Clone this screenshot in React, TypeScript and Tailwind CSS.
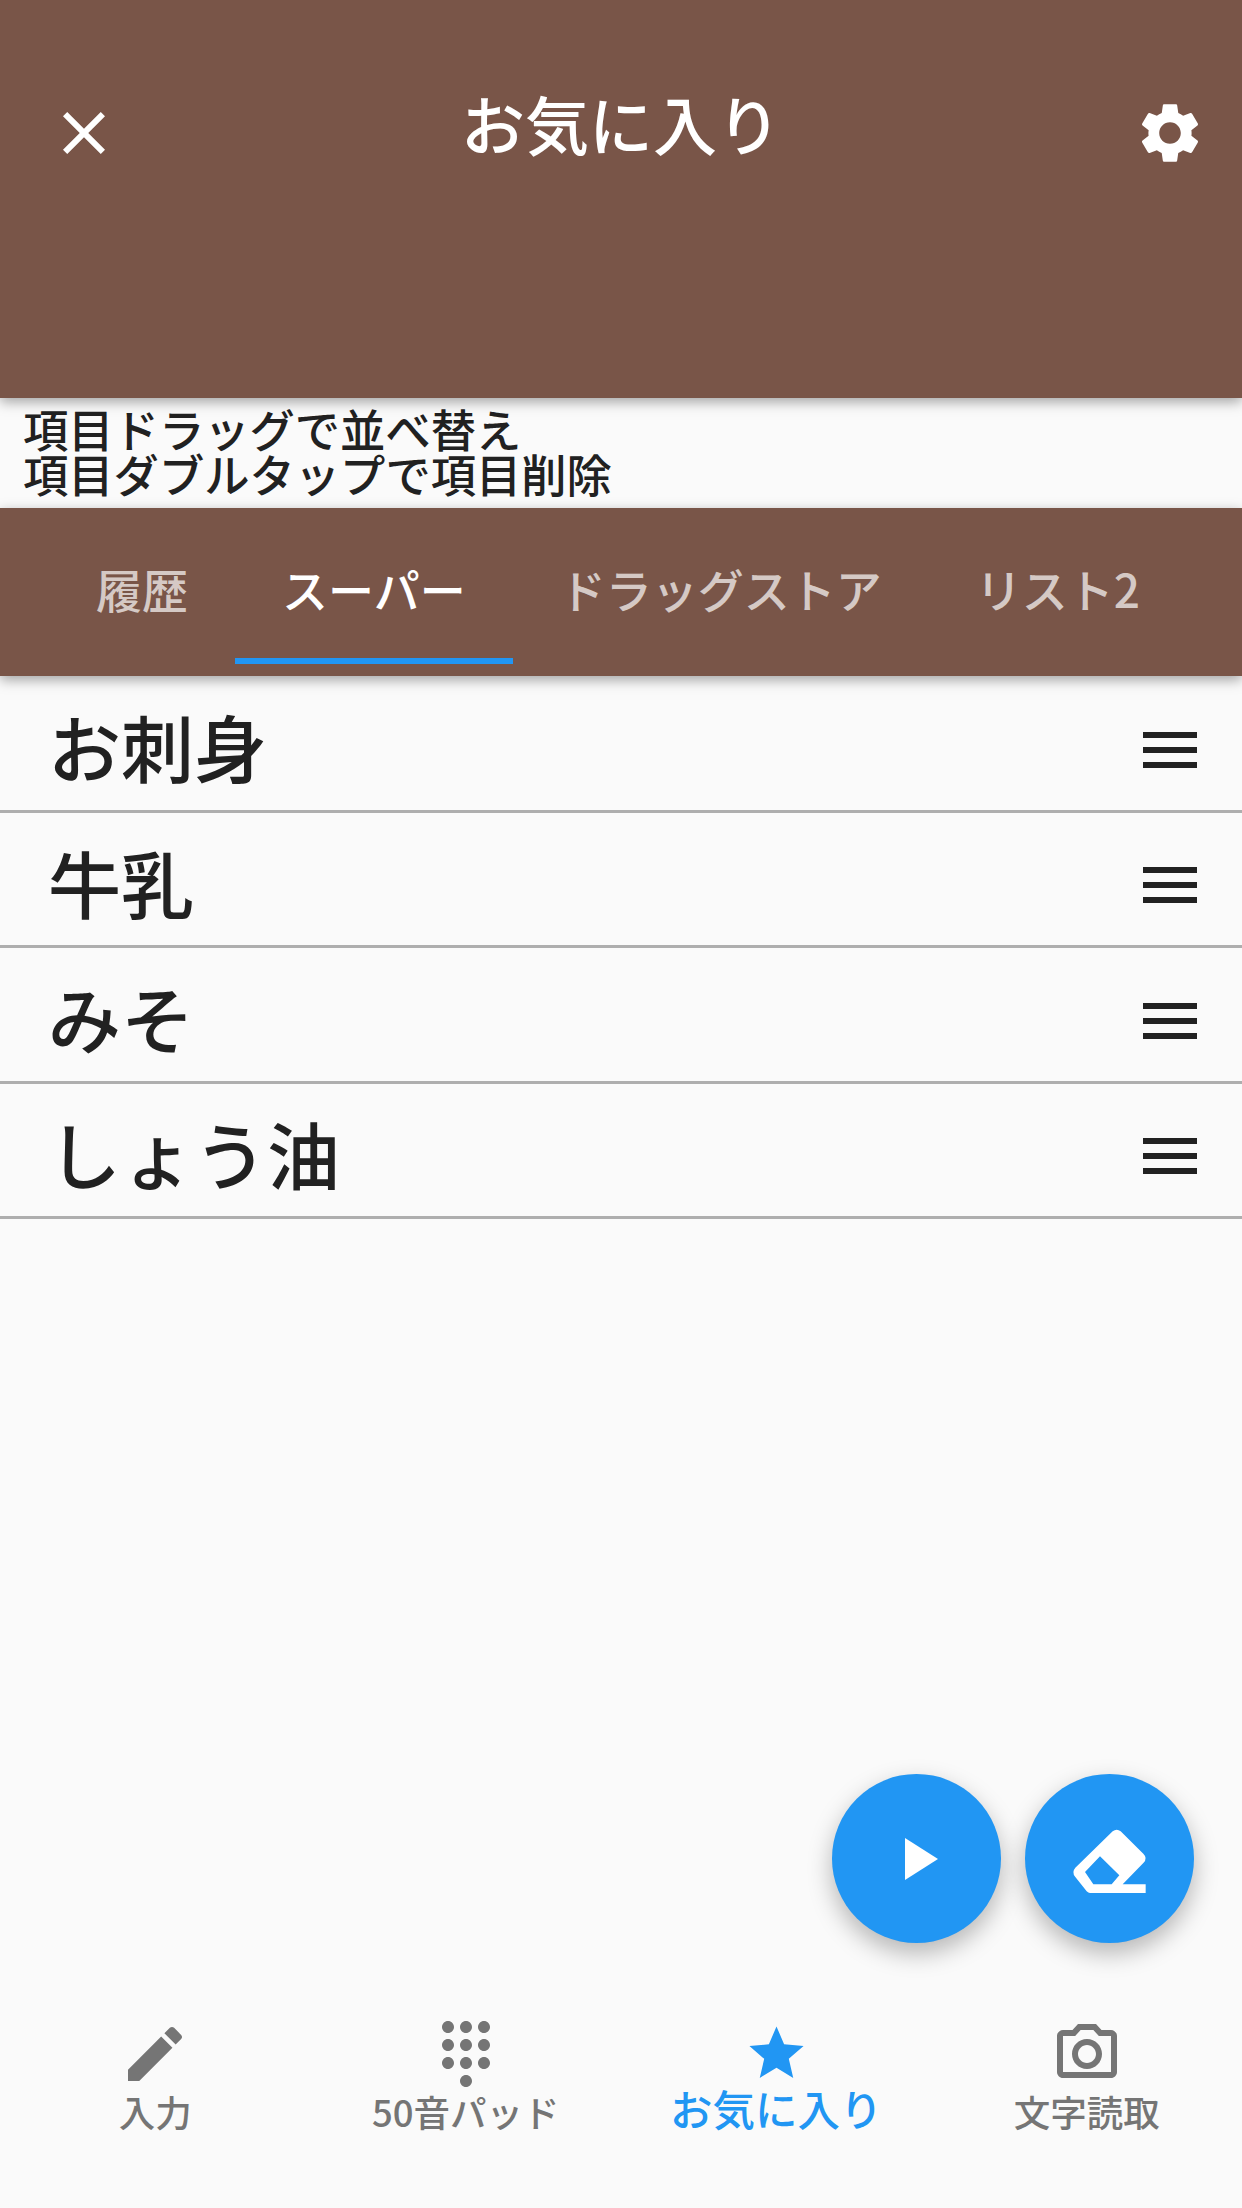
const cjk = "font-['Noto_Sans_CJK_JP',sans-serif]";

const items = ['お刺身', '牛乳', 'みそ', 'しょう油'];

function Icon({ d, className }: { d: string; className: string }) {
  return (
    <svg viewBox="0 0 24 24" className={className} fill="currentColor">
      <path d={d} />
    </svg>
  );
}

const CLOSE = 'M19 6.41L17.59 5 12 10.59 6.41 5 5 6.41 10.59 12 5 17.59 6.41 19 12 13.41 17.59 19 19 17.59 13.41 12z';
const SETTINGS =
  'M19.14,12.94c0.04-0.3,0.06-0.61,0.06-0.94c0-0.32-0.02-0.64-0.07-0.94l2.03-1.58c0.18-0.14,0.23-0.41,0.12-0.61 l-1.92-3.32c-0.12-0.22-0.37-0.29-0.59-0.22l-2.39,0.96c-0.5-0.38-1.03-0.7-1.62-0.94L14.4,2.81c-0.04-0.24-0.24-0.41-0.48-0.41 h-3.84c-0.24,0-0.43,0.17-0.47,0.41L9.25,5.35C8.66,5.59,8.12,5.92,7.63,6.29L5.24,5.33c-0.22-0.08-0.47,0-0.59,0.22L2.74,8.87 C2.62,9.08,2.66,9.34,2.86,9.48l2.03,1.58C4.84,11.36,4.8,11.69,4.8,12s0.02,0.64,0.07,0.94l-2.03,1.58 c-0.18,0.14-0.23,0.41-0.12,0.61l1.92,3.32c0.12,0.22,0.37,0.29,0.59,0.22l2.39-0.96c0.5,0.38,1.03,0.7,1.62,0.94l0.36,2.54 c0.05,0.24,0.24,0.41,0.48,0.41h3.84c0.24,0,0.44-0.17,0.47-0.41l0.36-2.54c0.59-0.24,1.13-0.56,1.62-0.94l2.39,0.96 c0.22,0.08,0.47,0,0.59-0.22l1.92-3.32c0.12-0.22,0.07-0.47-0.12-0.61L19.14,12.94z M12,15.6c-1.98,0-3.6-1.62-3.6-3.6 s1.62-3.6,3.6-3.6s3.6,1.62,3.6,3.6S13.98,15.6,12,15.6z';
const MENU = 'M3 18h18v-2H3v2zm0-5h18v-2H3v2zm0-7v2h18V6H3z';
const PLAY = 'M8 5v14l11-7z';
const EDIT =
  'M3 17.25V21h3.75L17.81 9.94l-3.75-3.75L3 17.25zM20.71 7.04c.39-.39.39-1.02 0-1.41l-2.34-2.34c-.39-.39-1.02-.39-1.41 0l-1.83 1.83 3.75 3.75 1.83-1.83z';
const DIALPAD =
  'M12 19c-1.1 0-2 .9-2 2s.9 2 2 2 2-.9 2-2-.9-2-2-2zM6 1c-1.1 0-2 .9-2 2s.9 2 2 2 2-.9 2-2-.9-2-2-2zm0 6c-1.1 0-2 .9-2 2s.9 2 2 2 2-.9 2-2-.9-2-2-2zm0 6c-1.1 0-2 .9-2 2s.9 2 2 2 2-.9 2-2-.9-2-2-2zm12-8c1.1 0 2-.9 2-2s-.9-2-2-2-2 .9-2 2 .9 2 2 2zm-6 8c-1.1 0-2 .9-2 2s.9 2 2 2 2-.9 2-2-.9-2-2-2zm6 0c-1.1 0-2 .9-2 2s.9 2 2 2 2-.9 2-2-.9-2-2-2zm0-6c-1.1 0-2 .9-2 2s.9 2 2 2 2-.9 2-2-.9-2-2-2zm-6 0c-1.1 0-2 .9-2 2s.9 2 2 2 2-.9 2-2-.9-2-2-2zm0-6c-1.1 0-2 .9-2 2s.9 2 2 2 2-.9 2-2-.9-2-2-2z';
const STAR = 'M12 17.27L18.18 21l-1.64-7.03L22 9.24l-7.19-.61L12 2 9.19 8.63 2 9.24l5.46 4.73L5.82 21z';
const CAMERA =
  'M14.12 4l1.83 2H20v12H4V6h4.05l1.83-2h4.24M15 2H9L7.17 4H4c-1.1 0-2 .9-2 2v12c0 1.1.9 2 2 2h16c1.1 0 2-.9 2-2V6c0-1.1-.9-2-2-2h-3.17L15 2zm-3 7c1.65 0 3 1.35 3 3s-1.35 3-3 3-3-1.35-3-3 1.35-3 3-3m0-2c-2.76 0-5 2.24-5 5s2.24 5 5 5 5-2.24 5-5-2.24-5-5-5z';

function Eraser() {
  return (
    <svg viewBox="870 260 240 210" className="w-[80px] h-[70px] mt-[6px]" fill="#ffffff">
      <path
        fillRule="evenodd"
        d="M998 273Q1010 263 1022 273L1090 340Q1104 354 1090 368L1028 432L1097 432L1097 458L930 458Q925 458 920 453L886 410Q874 396 886 382ZM960 348L1018 405L995 432L940 432L915 395Z"
      />
    </svg>
  );
}

function Tab({ label, active }: { label: string; active?: boolean }) {
  return (
    <div className="relative h-full px-[47px] flex items-center pb-[9px]">
      <span className={`text-[46px] font-medium leading-none whitespace-nowrap ${active ? 'text-white' : 'text-white/70'}`}>
        {label}
      </span>
      {active && <div className="absolute left-0 right-0 bottom-[12px] h-[6px] bg-[#2196f3]" />}
    </div>
  );
}

function NavItem({ d, label }: { d: string; label: string }) {
  return (
    <div className="flex flex-col items-center text-[#757575]">
      <Icon d={d} className="w-[72px] h-[72px]" />
      <span className="mt-px text-[36.5px] font-medium leading-[42px] whitespace-nowrap">{label}</span>
    </div>
  );
}

export default function App() {
  return (
    <div className={`relative w-[1242px] h-[2208px] overflow-hidden flex flex-col bg-[#fafafa] ${cjk}`}>
      {/* app bar */}
      <header className="relative z-10 h-[398px] shrink-0 bg-[#795548] text-white flex items-start justify-between pl-[48px] pr-[36px] shadow-[0_4px_12px_rgba(0,0,0,0.35)]">
        <Icon d={CLOSE} className="w-[72px] h-[72px] mt-[97px]" />
        <h1 className="mt-[85px] mr-[12px] text-[64px] font-medium leading-[75px] whitespace-nowrap">お気に入り</h1>
        <Icon d={SETTINGS} className="w-[72px] h-[72px] mt-[97px]" />
      </header>

      <div className="h-[110px] shrink-0 pl-[23px] pt-[8px] text-[45.3px] font-medium leading-[45px] text-[#212121]">
        <p>項目ドラッグで並べ替え</p>
        <p>項目ダブルタップで項目削除</p>
      </div>

      {/* tabs */}
      <div className="relative z-10 h-[168px] shrink-0 bg-[#795548] flex justify-center pr-[6px] shadow-[0_4px_12px_rgba(0,0,0,0.35)]">
        <Tab label="履歴" />
        <Tab label="スーパー" active />
        <Tab label="ドラッグストア" />
        <Tab label="リスト2" />
      </div>

      <ul className="flex-1 mt-px">
        {items.map((item) => (
          <li
            key={item}
            className="h-[135.5px] border-b-[3px] border-[#aeaeae] pt-[13px] pl-[48px] pr-[36px] flex items-center justify-between text-[#212121]"
          >
            <span className="text-[73px] font-medium leading-none mb-[8px]">{item}</span>
            <Icon d={MENU} className="w-[72px] h-[72px]" />
          </li>
        ))}
      </ul>

      {/* floating buttons */}
      <div className="absolute right-[48px] bottom-[265px] flex gap-[24px]">
        <button className="w-[169px] h-[169px] rounded-full bg-[#2196f3] text-white flex items-center justify-center shadow-[0_10px_24px_rgba(0,0,0,0.28)]">
          <Icon d={PLAY} className="w-[72px] h-[72px]" />
        </button>
        <button className="w-[169px] h-[169px] rounded-full bg-[#2196f3] flex items-center justify-center shadow-[0_10px_24px_rgba(0,0,0,0.28)]">
          <Eraser />
        </button>
      </div>

      {/* bottom nav */}
      <nav className="h-[190px] shrink-0 grid grid-cols-4">
        <NavItem d={EDIT} label="入力" />
        <NavItem d={DIALPAD} label="50音パッド" />
        <div className="flex flex-col items-center text-[#2196f3]">
          <Icon d={STAR} className="w-[65px] h-[65px] mt-[3px]" />
          <span className="mt-px text-[42.5px] font-medium leading-[42px] whitespace-nowrap">お気に入り</span>
        </div>
        <NavItem d={CAMERA} label="文字読取" />
      </nav>
    </div>
  );
}
